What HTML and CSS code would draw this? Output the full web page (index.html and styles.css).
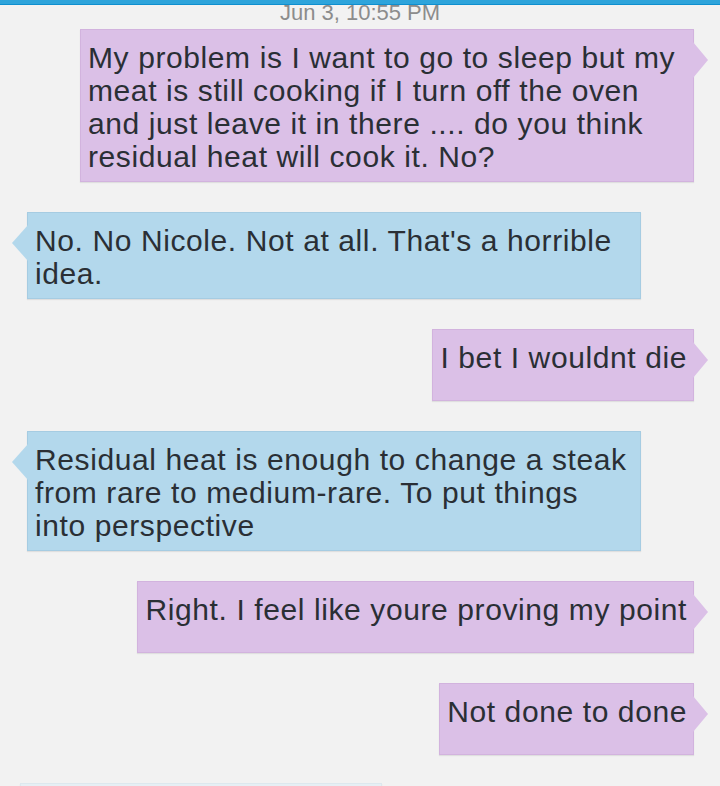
FILE: index.html
```html
<!DOCTYPE html>
<html lang="en">
<head>
  <meta charset="UTF-8">
  <meta name="viewport" content="width=device-width, initial-scale=1.0">
  <title>Messages</title>
  <link rel="stylesheet" href="styles.css">
</head>
<body>
  <div class="topbar"></div>

  <main class="thread">
    <div class="stamp">Jun 3, 10:55 PM</div>

    <div class="messages">
      <div class="msg out">My problem is I want to go to sleep but my meat is still cooking if I turn off the oven and just leave it in there .... do you think residual heat will cook it. No?</div>
      <div class="msg in">No. No Nicole. Not at all. That's a horrible idea.</div>
      <div class="msg out">I bet I wouldnt die</div>
      <div class="msg in">Residual heat is enough to change a steak from rare to medium-rare. To put things into perspective</div>
      <div class="msg out">Right. I feel like youre proving my point</div>
      <div class="msg out">Not done to done</div>
      <div class="msg in peek"></div>
    </div>
  </main>
</body>
</html>
```

FILE: styles.css
```css
:root {
  --bg: #f2f2f2;
  --bar: #2ea4db;
  --bar-edge: #0e8fcf;
  --sent: #dbc0e7;
  --sent-edge: #d2b3de;
  --recv: #b3d8ec;
  --recv-edge: #a6cce2;
  --text: #2a2f35;
  --muted: #8c8c8c;
}

html, body {
  height: 100%;
}

body {
  margin: 0;
  background-color: var(--bg);
  font-family: 'Liberation Sans', Arial, sans-serif;
  color: var(--text);
  overflow: hidden;
}

.topbar {
  height: 4px;
  background-color: var(--bar);
  border-bottom: 1px solid var(--bar-edge);
  position: relative;
  z-index: 1;
}

.thread {
  overflow: hidden;
}

.stamp {
  margin-top: -4px;
  height: 24px;
  font-size: 22px;
  line-height: 24px;
  text-align: center;
  color: var(--muted);
}

.messages {
  display: flex;
  flex-direction: column;
  gap: 30px;
  margin-top: 4px;
}

.msg {
  position: relative;
  box-sizing: border-box;
  max-width: 614px;
  min-height: 72px;
  padding: 11px 6px 8px 7px;
  font-size: 30px;
  line-height: 33px;
  letter-spacing: 0.6px;
  box-shadow: 0 1px 1px rgba(0, 0, 0, 0.08);
}

.msg::after {
  content: '';
  position: absolute;
  top: 12px;
  border-top: 18px solid transparent;
  border-bottom: 18px solid transparent;
}

.msg.out {
  align-self: flex-end;
  margin-right: 26px;
  background-color: var(--sent);
  border: 1px solid var(--sent-edge);
}

.msg.out::after {
  left: 100%;
  border-left: 15px solid var(--sent);
}

.msg.in {
  align-self: flex-start;
  margin-left: 27px;
  background-color: var(--recv);
  border: 1px solid var(--recv-edge);
}

.msg.in::after {
  right: 100%;
  border-right: 16px solid var(--recv);
}

.msg.peek {
  width: 362px;
  margin-top: -2px;
  margin-left: 20px;
  background-color: #e6eff4;
  border-color: #dde8ee;
}
```
